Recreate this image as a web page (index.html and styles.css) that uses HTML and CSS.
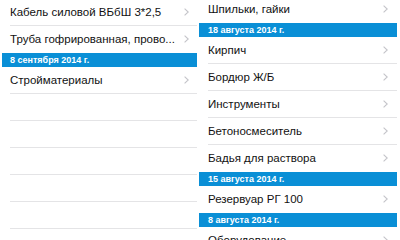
FILE: index.html
```html
<!DOCTYPE html>
<html lang="ru">
<head>
<meta charset="utf-8">
<link rel="stylesheet" href="styles.css">
</head>
<body>
<div class="screen">
  <div class="panel panel-left">
    <div class="row"><div class="cell"><span class="title">Кабель силовой ВБбШ 3*2,5</span><svg class="chev" width="5" height="8" viewBox="0 0 5 8"><polyline points="0.6,0.6 4.2,4 0.6,7.4"/></svg></div></div>
    <div class="row last"><div class="cell"><span class="title">Труба гофрированная, прово...</span><svg class="chev" width="5" height="8" viewBox="0 0 5 8"><polyline points="0.6,0.6 4.2,4 0.6,7.4"/></svg></div></div>
    <div class="header">8 сентября 2014 г.</div>
    <div class="row"><div class="cell"><span class="title">Стройматериалы</span><svg class="chev" width="5" height="8" viewBox="0 0 5 8"><polyline points="0.6,0.6 4.2,4 0.6,7.4"/></svg></div></div>
    <div class="row"><div class="cell"></div></div>
    <div class="row"><div class="cell"></div></div>
    <div class="row"><div class="cell"></div></div>
    <div class="row"><div class="cell"></div></div>
    <div class="row"><div class="cell"></div></div>
  </div>
  <div class="panel panel-right">
    <div class="row last"><div class="cell"><span class="title">Шпильки, гайки</span><svg class="chev" width="5" height="8" viewBox="0 0 5 8"><polyline points="0.6,0.6 4.2,4 0.6,7.4"/></svg></div></div>
    <div class="header">18 августа 2014 г.</div>
    <div class="row"><div class="cell"><span class="title">Кирпич</span><svg class="chev" width="5" height="8" viewBox="0 0 5 8"><polyline points="0.6,0.6 4.2,4 0.6,7.4"/></svg></div></div>
    <div class="row"><div class="cell"><span class="title">Бордюр Ж/Б</span><svg class="chev" width="5" height="8" viewBox="0 0 5 8"><polyline points="0.6,0.6 4.2,4 0.6,7.4"/></svg></div></div>
    <div class="row"><div class="cell"><span class="title">Инструменты</span><svg class="chev" width="5" height="8" viewBox="0 0 5 8"><polyline points="0.6,0.6 4.2,4 0.6,7.4"/></svg></div></div>
    <div class="row"><div class="cell"><span class="title">Бетоносмеситель</span><svg class="chev" width="5" height="8" viewBox="0 0 5 8"><polyline points="0.6,0.6 4.2,4 0.6,7.4"/></svg></div></div>
    <div class="row last"><div class="cell"><span class="title">Бадья для раствора</span><svg class="chev" width="5" height="8" viewBox="0 0 5 8"><polyline points="0.6,0.6 4.2,4 0.6,7.4"/></svg></div></div>
    <div class="header">15 августа 2014 г.</div>
    <div class="row last"><div class="cell"><span class="title">Резервуар РГ 100</span><svg class="chev" width="5" height="8" viewBox="0 0 5 8"><polyline points="0.6,0.6 4.2,4 0.6,7.4"/></svg></div></div>
    <div class="header">8 августа 2014 г.</div>
    <div class="row"><div class="cell"><span class="title">Оборудование</span><svg class="chev" width="5" height="8" viewBox="0 0 5 8"><polyline points="0.6,0.6 4.2,4 0.6,7.4"/></svg></div></div>
  </div>
</div>
</body>
</html>
```
FILE: styles.css
```css
html, body {
  margin: 0;
  padding: 0;
  background: #ffffff;
}
.screen {
  width: 400px;
  height: 240px;
  overflow: hidden;
  display: flex;
  gap: 2px;
  padding: 0 3px 0 2px;
  box-sizing: border-box;
  font-family: "Liberation Sans", Arial, sans-serif;
  color: #111111;
}
.panel {
  display: flex;
  flex-direction: column;
  overflow: hidden;
}
.panel-left {
  width: 195px;
  margin-top: -1px;
}
.panel-right {
  width: 198px;
  margin-top: -4px;
}
.row {
  flex: none;
  height: 27px;
  padding-left: 8px;
  box-sizing: border-box;
  display: flex;
}
.panel-right .row {
  padding-left: 9px;
}
.cell {
  flex: 1;
  display: flex;
  align-items: center;
  justify-content: space-between;
  padding-right: 8px;
  border-bottom: 1px solid #e4e4e6;
}
.panel-right .cell {
  padding-right: 9px;
}
.row.last .cell {
  border-bottom-color: transparent;
}
.title {
  font-size: 11.5px;
  white-space: nowrap;
}
.chev {
  flex: none;
}
.chev polyline {
  fill: none;
  stroke: #c4c4c9;
  stroke-width: 1.1;
}
.header {
  flex: none;
  height: 14px;
  background: #0a8fd6;
  color: #ffffff;
  font-size: 9px;
  font-weight: bold;
  line-height: 14px;
  padding-left: 8px;
}
.panel-right .header {
  padding-left: 9px;
}
```
